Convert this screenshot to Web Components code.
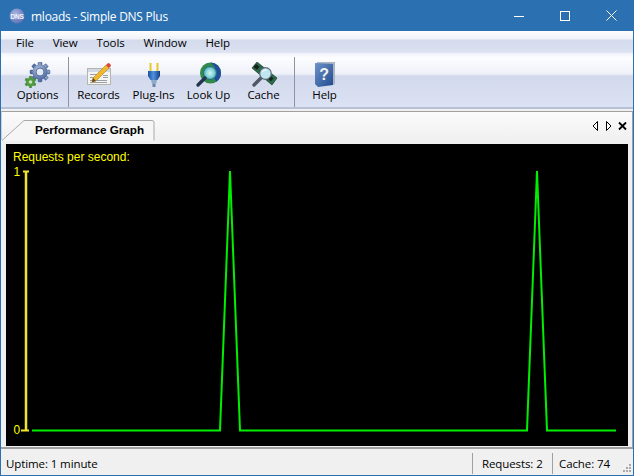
<!DOCTYPE html>
<html>
<head>
<meta charset="utf-8">
<title>mloads - Simple DNS Plus</title>
<style>
  html, body { margin: 0; padding: 0; height: 100%; overflow: hidden; }
</style>
</head>
<body>
<app-window>
  <title-bar slot="title">mloads - Simple DNS Plus</title-bar>
  <menu-bar slot="menu">
    <span>File</span><span>View</span><span>Tools</span><span>Window</span><span>Help</span>
  </menu-bar>
  <tool-bar slot="tools">
    <tool-button label="Options">
      <svg width="28" height="27" viewBox="0 0 28 27">
        <defs>
          <radialGradient id="g1" cx="40%" cy="35%" r="70%"><stop offset="0" stop-color="#b8c6e2"/><stop offset="1" stop-color="#46639a"/></radialGradient>
        </defs>
        <g transform="translate(16 10)">
          <g fill="url(#g1)" stroke="#4a6490" stroke-width=".5">
            <rect x="-2" y="-10" width="4" height="20" rx="1"/>
            <rect x="-2" y="-10" width="4" height="20" rx="1" transform="rotate(45)"/>
            <rect x="-2" y="-10" width="4" height="20" rx="1" transform="rotate(90)"/>
            <rect x="-2" y="-10" width="4" height="20" rx="1" transform="rotate(135)"/>
          </g>
          <circle r="7.6" fill="url(#g1)"/>
          <circle r="4" fill="#e4e9f3" stroke="#56709f"/>
        </g>
        <g transform="translate(6.5 20)">
          <g fill="#4d8a3c">
            <rect x="-1.3" y="-6" width="2.6" height="12"/>
            <rect x="-1.3" y="-6" width="2.6" height="12" transform="rotate(60)"/>
            <rect x="-1.3" y="-6" width="2.6" height="12" transform="rotate(120)"/>
          </g>
          <circle r="4.6" fill="#4f9a42"/>
          <circle r="1.8" fill="#c9e4bd"/>
        </g>
      </svg>
    </tool-button>
    <tool-sep></tool-sep>
    <tool-button label="Records">
      <svg width="28" height="27" viewBox="0 0 28 27">
        <rect x="2.5" y="6.5" width="23" height="16" fill="#f4f4f0" stroke="#b5b5ac"/>
        <rect x="3" y="7" width="22" height="3" fill="#cfd8e6"/>
        <path d="M5 12.5h9M5 15.5h7M5 18.5h17M5 20.5h17M18 13.5h5M18 15.5h5" stroke="#9aa0a8"/>
        <path d="M7 20l1-4L21 3l3 3L11 19z" fill="#f0b92d" stroke="#b57d18" stroke-width=".6"/>
        <path d="M7 20l1-4 3 3z" fill="#5c4426"/>
        <path d="M21 3l1.500-1.500a1.500 1.500 0 0 1 2 0l1 1a1.500 1.500 0 0 1 0 2L24 6z" fill="#d9473a"/>
      </svg>
    </tool-button>
    <tool-button label="Plug-Ins">
      <svg width="28" height="27" viewBox="0 0 28 27">
        <defs>
          <linearGradient id="g2" x1="0" x2="1"><stop offset="0" stop-color="#1d4f9c"/><stop offset=".45" stop-color="#4f92e0"/><stop offset="1" stop-color="#163d80"/></linearGradient>
        </defs>
        <rect x="9.500" y="1" width="2" height="9" fill="#e8c62c"/>
        <rect x="16.500" y="1" width="2" height="9" fill="#e8c62c"/>
        <path d="M8 9h12v5l-2.500 4h-7L8 14z" fill="url(#g2)"/>
        <path d="M11 18h6l-1 4h-4z" fill="#8fa9c9"/>
        <rect x="12.500" y="22" width="3" height="3" fill="#6c84a6"/>
      </svg>
    </tool-button>
    <tool-button label="Look Up">
      <svg width="28" height="27" viewBox="0 0 28 27">
        <defs>
          <radialGradient id="g3" cx="50%" cy="50%" r="55%"><stop offset="0" stop-color="#d6f3f0"/><stop offset=".55" stop-color="#83d8d8"/><stop offset="1" stop-color="#3f8fbd"/></radialGradient>
        </defs>
        <circle cx="15.500" cy="11" r="10.500" fill="#2f8a4c"/>
        <path d="M15.500.5a10.500 10.500 0 0 1 10.500 10.500 10.500 10.500 0 0 1-5 9l-3-7 2-8z" fill="#1f4f9a"/>
        <circle cx="15" cy="11" r="6.500" fill="url(#g3)" stroke="#2b6e73"/>
        <path d="M10 16l-7 7" stroke="#27344f" stroke-width="3.400" stroke-linecap="round"/>
      </svg>
    </tool-button>
    <tool-button label="Cache">
      <svg width="28" height="27" viewBox="0 0 28 27">
        <path d="M7 0l20 16-5 7L2 6z" fill="#2a6b47" stroke="#16291f" stroke-width=".6"/>
        <path d="M6 2l3.500 2.800-2.500 3-3.500-2.800zM11.500 6.500l3.500 2.800-2.500 3L9 9.500zM20 13.500l3.500 2.800-2.500 3-3.500-2.800z" fill="#18201e"/>
        <path d="M12 15l-8 8" stroke="#4f5863" stroke-width="3.400" stroke-linecap="round"/>
        <circle cx="15.500" cy="11.500" r="5.800" fill="#bfe6ee" stroke="#5d6c7c" stroke-width="1.200"/>
        <path d="M12.500 10a3.500 3.500 0 0 1 4-2" stroke="#fff" fill="none"/>
      </svg>
    </tool-button>
    <tool-sep></tool-sep>
    <tool-button label="Help">
      <svg width="28" height="27" viewBox="0 0 28 27">
        <defs>
          <linearGradient id="g4" x1="0" x2="1" y1="0" y2="1"><stop offset="0" stop-color="#6f93c9"/><stop offset="1" stop-color="#1f4a90"/></linearGradient>
        </defs>
        <path d="M6 0h18v22l-2 1V2H6z" fill="#aab4c2"/>
        <path d="M4 1l18 1v21L7 25 4 22z" fill="url(#g4)"/>
        <text x="13" y="18" text-anchor="middle" font-family="Liberation Sans" font-weight="700" font-size="16" fill="#f2f2ee">?</text>
      </svg>
    </tool-button>
  </tool-bar>
  <tab-strip slot="tabs" label="Performance Graph"></tab-strip>
  <perf-graph slot="graph"></perf-graph>
  <status-bar slot="status">
    <span slot="uptime">Uptime: 1 minute</span>
    <span slot="requests">Requests: 2</span>
    <span slot="cache">Cache: 74</span>
  </status-bar>
</app-window>

<script>
const uiFont = '"Open Sans", "Noto Sans", sans-serif'

customElements.define('app-window', class extends HTMLElement {
  constructor () {
    super()
    this.attachShadow({ mode: 'open' }).innerHTML = `
      <style>
        :host {
          display: flex;
          flex-direction: column;
          width: 634px;
          height: 476px;
          box-sizing: border-box;
          border: 1px solid #2b71b1;
          border-top: 0;
          background: #f0f0f0;
          font: 11.500px ${uiFont};
          letter-spacing: -0.1px;
          color: #000;
        }
      </style>
      <slot name="title"></slot>
      <slot name="menu"></slot>
      <slot name="tools"></slot>
      <slot name="tabs"></slot>
      <slot name="graph"></slot>
      <slot name="status"></slot>
    `
  }
})

customElements.define('title-bar', class extends HTMLElement {
  constructor () {
    super()
    this.attachShadow({ mode: 'open' }).innerHTML = `
      <style>
        :host {
          display: flex;
          align-items: center;
          height: 31px;
          margin: 0 -1px;
          background: #2b71b1;
          color: #fff;
          font-size: 12px;
          letter-spacing: -0.25px;
        }
        .logo { margin: 0 6px 0 9px; flex: none; }
        .text { flex: 1; padding-top: 1px; }
        .ctl { width: 46px; height: 31px; display: flex; align-items: center; justify-content: center; }
        .ctl svg { display: block; }
      </style>
      <svg class="logo" width="16" height="16" viewBox="0 0 16 16">
        <defs><radialGradient id="b" cx="40%" cy="35%" r="70%"><stop offset="0" stop-color="#a9b7e2"/><stop offset="1" stop-color="#5a6db0"/></radialGradient></defs>
        <circle cx="8" cy="8" r="7.500" fill="url(#b)"/>
        <text x="8" y="10.500" text-anchor="middle" font-family="Liberation Sans" font-size="6.500" font-weight="700" fill="#f4f6fb">DNS</text>
      </svg>
      <span class="text"><slot></slot></span>
      <span class="ctl"><svg width="10" height="10"><path d="M0 5.500h10" stroke="#fff"/></svg></span>
      <span class="ctl"><svg width="10" height="10"><rect x=".5" y=".5" width="9" height="9" fill="none" stroke="#fff"/></svg></span>
      <span class="ctl"><svg width="11" height="11"><path d="M.5.500l10 10M10.500.500l-10 10" stroke="#fff" fill="none"/></svg></span>
    `
  }
})

customElements.define('menu-bar', class extends HTMLElement {
  constructor () {
    super()
    this.attachShadow({ mode: 'open' }).innerHTML = `
      <style>
        :host {
          display: flex;
          align-items: center;
          gap: 19px;
          height: 22px;
          padding-left: 15px;
          background: linear-gradient(#fdfdfe 0, #f0f2f9 8px, #d4dbec 9px, #d9dfef 18px, #e0e5f3 22px);
        }
      </style>
      <slot></slot>
    `
  }
})

customElements.define('tool-bar', class extends HTMLElement {
  constructor () {
    super()
    this.attachShadow({ mode: 'open' }).innerHTML = `
      <style>
        :host {
          display: flex;
          align-items: stretch;
          height: 54px;
          padding-left: 9px;
          border-bottom: 2px solid #b9c1d6;
          background: linear-gradient(#f1f3fa 0, #fdfdff 5px, #eef1f8 21px, #d3d9ec 23px, #dbe2f3 54px);
        }
      </style>
      <slot></slot>
    `
  }
})

customElements.define('tool-button', class extends HTMLElement {
  constructor () {
    super()
    this.attachShadow({ mode: 'open' }).innerHTML = `
      <style>
        :host {
          display: flex;
          flex-direction: column;
          align-items: center;
          width: 55px;
          padding-top: 9px;
          box-sizing: border-box;
        }
        .icon { height: 27px; }
        .icon ::slotted(svg) { display: block; }
        .label { margin-top: -2px; white-space: nowrap; line-height: 16px; }
      </style>
      <div class="icon"><slot></slot></div>
      <div class="label"></div>
    `
    this.shadowRoot.querySelector('.label').textContent = this.getAttribute('label')
  }
})

customElements.define('tool-sep', class extends HTMLElement {
  constructor () {
    super()
    this.attachShadow({ mode: 'open' }).innerHTML = `
      <style>
        :host {
          display: block;
          width: 1px;
          margin: 4px 2px 0 3px;
          background: #8f949f;
        }
      </style>
    `
  }
})

customElements.define('tab-strip', class extends HTMLElement {
  constructor () {
    super()
    this.attachShadow({ mode: 'open' }).innerHTML = `
      <style>
        :host {
          display: flex;
          justify-content: space-between;
          height: 29px;
          margin-top: 2px;
          box-sizing: border-box;
          border-top: 1px solid #a0a0a0;
          border-left: 1px solid #d0d0d0;
          border-right: 1px solid #a0a0a0;
          background: linear-gradient(#fbfbfb, #f0f0f0);
          position: relative;
          letter-spacing: 0;
        }
        .tab {
          margin-left: 33px;
          padding-top: 11px;
          font: 700 11.700px "Liberation Sans", Arial, sans-serif;
          position: relative;
        }
        .tab-shape { position: absolute; left: 0; top: 0; }
        .controls { display: flex; gap: 5px; padding: 9px 5px 0 0; align-items: flex-start; }
        .controls svg { display: block; }
      </style>
      <svg class="tab-shape" width="170" height="29">
        <path d="M0 28.500L22 8.500H150q2 0 2 2V28.500" fill="#f6f6f6" stroke="#a9a9a9"/>
      </svg>
      <div class="tab"></div>
      <div class="controls">
        <svg width="8" height="10"><path d="M5.500.5v9L1 5z" fill="#fff" stroke="#000"/></svg>
        <svg width="8" height="10"><path d="M1.500.5v9L6 5z" fill="#fff" stroke="#000"/></svg>
        <svg width="9" height="10"><path d="M1 1.500l7 7M8 1.500l-7 7" stroke="#000" stroke-width="1.800" fill="none"/></svg>
      </div>
    `
    this.shadowRoot.querySelector('.tab').textContent = this.getAttribute('label')
  }
})

customElements.define('perf-graph', class extends HTMLElement {
  constructor () {
    super()
    this.attachShadow({ mode: 'open' }).innerHTML = `
      <style>
        :host {
          display: block;
          flex: 1;
          min-height: 0;
          padding: 4px 4px 1px 5px;
          background: #f0f0f0;
          border-right: 1px solid #a0a0a0;
          border-top: 1px solid #a0a0a0;
          border-bottom: 2px solid #a0a0a0;
          box-sizing: border-box;
          margin-top: -1px;
        }
        svg { display: block; background: #000; width: 622px; height: 302px; }
        text { font: 12px "Liberation Sans", Arial, sans-serif; letter-spacing: 0; fill: #ff0; }
      </style>
      <svg viewBox="6 144 622 302">
        <text x="13" y="161">Requests per second:</text>
        <text x="13.500" y="176">1</text>
        <text x="13.500" y="434">0</text>
        <path d="M26 171V430" stroke="#f2e530" stroke-width="2.500"/>
        <path d="M23 171.500h6M21 430.500h8" stroke="#f2e530" stroke-width="2"/>
        <path d="M32 430.500H220L230 171l10 259.500H527L537 171l10 259.500H616" fill="none" stroke="#00ee00" stroke-width="2"/>
      </svg>
    `
  }
})

customElements.define('status-bar', class extends HTMLElement {
  constructor () {
    super()
    this.attachShadow({ mode: 'open' }).innerHTML = `
      <style>
        :host {
          display: flex;
          align-items: center;
          height: 26px;
          padding: 2px 1px 0 5px;
          box-sizing: border-box;
          background: #f0f0f0;
          position: relative;
        }
        .uptime { flex: 1; }
        .cell { border-left: 1px solid #a0a0a0; height: 21px; display: flex; align-items: center; box-sizing: border-box; }
        .requests { width: 80px; padding-left: 9px; }
        .cache { width: 80px; padding-left: 6px; }
        .grip { position: absolute; right: 1px; bottom: 2px; }
      </style>
      <div class="uptime"><slot name="uptime"></slot></div>
      <div class="cell requests"><slot name="requests"></slot></div>
      <div class="cell cache"><slot name="cache"></slot></div>
      <svg class="grip" width="10" height="10" fill="#a9a9a9">
        <rect x="7" y="1" width="2" height="2"/>
        <rect x="4" y="4" width="2" height="2"/><rect x="7" y="4" width="2" height="2"/>
        <rect x="1" y="7" width="2" height="2"/><rect x="4" y="7" width="2" height="2"/><rect x="7" y="7" width="2" height="2"/>
      </svg>
    `
  }
})
</script>
</body>
</html>
